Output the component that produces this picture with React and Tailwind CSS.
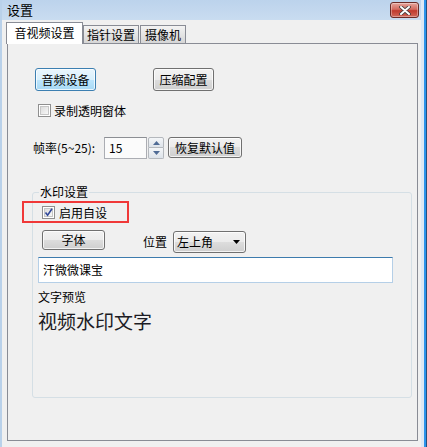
import React from 'react'

function Btn({ children, className = '', focused = false }) {
  return (
    <div
      className={`flex items-center justify-center rounded-[3px] border text-[12px] leading-none text-black shadow-[inset_0_0_0_1px_rgba(255,255,255,0.75)] ${
        focused
          ? 'border-[#3c7fb1] bg-[linear-gradient(#eaf6fd,#d9f0fc_50%,#bee6fd_50%,#a7d9f5)]'
          : 'border-[#707070] bg-[linear-gradient(#f2f2f2,#ebebeb_50%,#dddddd_50%,#cfcfcf)]'
      } ${className}`}
    >
      {children}
    </div>
  )
}

function Check({ checked = false }) {
  return (
    <div className="w-[13px] h-[13px] border border-[#8f8f8f] bg-white p-px shrink-0">
      <div className="relative w-full h-full border border-[#c6c6c6] bg-linear-to-br from-[#dcdcdc] to-[#f8f8f8]">
        {checked && (
          <svg viewBox="0 0 9 9" className="absolute -left-px -top-px w-[9px] h-[9px]">
            <path d="M1.5 4.5 L3.6 7.2 L8 0.8" fill="none" stroke="#31489a" strokeWidth="1.6" />
          </svg>
        )}
      </div>
    </div>
  )
}

export default function App() {
  return (
    <div className="w-[427px] h-[447px] flex overflow-hidden bg-[#f0f0f0] font-['Noto_Sans_CJK_SC',sans-serif] text-[12px] text-black">
      <div className="w-[2px] bg-[#b9d1ea]" />

      <div className="w-[419px] flex flex-col">
        {/* title bar */}
        <div className="h-[20px] flex items-start justify-between bg-linear-to-b from-[#bcd3ec] to-[#c9dcf0] pl-[5px] pr-[2px]">
          <span className="mt-[2px] text-[13px] leading-[16px]">设置</span>
          <div className="mt-[2px] w-[29px] h-[16px] rounded-[3px] border border-[#6b2b27] bg-[linear-gradient(#e5a69e,#d36a5f_45%,#c03a2d_55%,#d0685a)] flex items-center justify-center shadow-[inset_0_0_0_1px_rgba(255,255,255,0.35)]">
            <svg viewBox="0 0 12 9" className="w-[12px] h-[9px]">
              <path d="M2 1 L10 8 M10 1 L2 8" stroke="#3b3b3b" strokeWidth="3.6" strokeLinecap="round" />
              <path d="M2 1 L10 8 M10 1 L2 8" stroke="#ffffff" strokeWidth="2" strokeLinecap="round" />
            </svg>
          </div>
        </div>

        {/* tabs */}
        <div className="h-[23px] flex items-end pl-[4px]">
          <div className="relative z-10 -mb-px w-[77px] h-[22px] bg-white border border-b-0 border-[#898c95] flex items-center justify-center text-[12px] leading-none pb-[2px]">
            音视频设置
          </div>
          <div className="w-[56px] h-[18px] border border-b-0 border-[#898c95] bg-linear-to-b from-[#f3f3f3] to-[#d6d6d6] flex items-center justify-center leading-none">
            指针设置
          </div>
          <div className="ml-px w-[46px] h-[18px] border border-b-0 border-[#898c95] bg-linear-to-b from-[#f3f3f3] to-[#d6d6d6] flex items-center justify-center leading-none">
            摄像机
          </div>
        </div>

        {/* panel */}
        <div className="ml-[5px] w-[411px] h-[398px] border border-[#898c95] flex flex-col">
          <div className="mt-[24px] pl-[27px] flex">
            <Btn focused className="w-[61px] h-[23px]">音频设备</Btn>
            <Btn className="ml-[57px] w-[61px] h-[23px]">压缩配置</Btn>
          </div>

          <div className="mt-[13px] pl-[30px] flex items-center gap-[3px] h-[13px]">
            <Check />
            <span className="leading-none">录制透明窗体</span>
          </div>

          <div className="mt-[20px] pl-[25px] flex items-start h-[22px]">
            <span className="mt-[5px] leading-none w-[71px]">帧率(5~25):</span>
            <div className="w-[43px] h-[22px] border border-[#abadb3] border-t-[#8c8f94] bg-[#fbfbfb] flex items-center pl-[4px] leading-none">
              15
            </div>
            <div className="ml-px w-[16px] h-[22px] flex flex-col">
              <div className="h-[11px] border border-[#b4b8bd] rounded-t-[2px] bg-linear-to-b from-[#f4f6f8] to-[#dde3ea] flex items-center justify-center">
                <svg viewBox="0 0 7 4" className="w-[7px] h-[4px]">
                  <path d="M0 4 L3.5 0 L7 4 Z" fill="#4f6b95" />
                </svg>
              </div>
              <div className="h-[11px] border border-t-0 border-[#b4b8bd] rounded-b-[2px] bg-linear-to-b from-[#f4f6f8] to-[#dde3ea] flex items-center justify-center">
                <svg viewBox="0 0 7 4" className="w-[7px] h-[4px]">
                  <path d="M0 0 L3.5 4 L7 0 Z" fill="#4f6b95" />
                </svg>
              </div>
            </div>
            <Btn className="ml-[4px] w-[74px] h-[21px]">恢复默认值</Btn>
          </div>

          {/* watermark group */}
          <div className="relative mt-[33px] ml-[24px] w-[380px] h-[206px] rounded-[3px] border border-[#d5dfe5] flex flex-col">
            <span className="absolute left-[6px] -top-[8px] px-[1px] bg-[#f0f0f0] leading-[14px]">水印设置</span>
            <div className="absolute -left-[11px] top-[8px] w-[107px] h-[22px] border-2 border-[#f03838]" />

            <div className="mt-[13px] ml-[9px] flex items-center gap-[4px] h-[13px]">
              <Check checked />
              <span className="leading-none">启用自设</span>
            </div>

            <div className="mt-[11px] ml-[9px] flex items-start h-[23px]">
              <Btn className="w-[63px] h-[20px]">字体</Btn>
              <span className="ml-[38px] mt-[6px] leading-none">位置</span>
              <div className="ml-[6px] mt-px w-[73px] h-[22px] rounded-[3px] border border-[#707070] bg-[linear-gradient(#f2f2f2,#ebebeb_50%,#dddddd_50%,#cfcfcf)] shadow-[inset_0_0_0_1px_rgba(255,255,255,0.75)] flex items-center pl-[3px] pr-[5px] justify-between">
                <span className="leading-none">左上角</span>
                <svg viewBox="0 0 7 4" className="w-[7px] h-[4px]">
                  <path d="M0 0 L3.5 4 L7 0 Z" fill="#000" />
                </svg>
              </div>
            </div>

            <div className="mt-[4px] ml-[5px] w-[355px] h-[26px] border border-[#b5cfe7] border-t-[#3d7bad] bg-white flex items-center pl-[4px] leading-none">
              汗微微课宝
            </div>

            <span className="mt-[6px] ml-[5px] leading-[16px]">文字预览</span>
            <span className="mt-[4px] ml-[5px] text-[19px] leading-[24px] text-[#1c1c24]">视频水印文字</span>
          </div>
        </div>
      </div>

      <div className="w-[3px] bg-[#dde8f4]" />
      <div className="w-[2px] bg-[#2b93ec]" />
      <div className="w-px bg-[#24507f]" />
    </div>
  )
}
